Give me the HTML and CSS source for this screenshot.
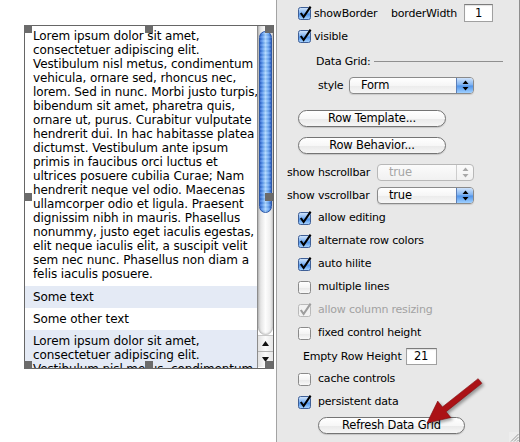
FILE: index.html
```html
<!DOCTYPE html>
<html>
<head>
<meta charset="utf-8">
<link rel="stylesheet" href="styles.css">
</head>
<body>
<svg class="defs" aria-hidden="true">
  <defs>
    <linearGradient id="gBlue" x1="0" y1="0" x2="0" y2="1">
      <stop offset="0" stop-color="#d6e8fc"/>
      <stop offset="0.45" stop-color="#7fb2f1"/>
      <stop offset="0.55" stop-color="#4f94eb"/>
      <stop offset="1" stop-color="#acd6ff"/>
    </linearGradient>
    <linearGradient id="gWhite" x1="0" y1="0" x2="0" y2="1">
      <stop offset="0" stop-color="#ffffff"/>
      <stop offset="0.5" stop-color="#f4f4f4"/>
      <stop offset="0.55" stop-color="#e9e9e9"/>
      <stop offset="1" stop-color="#fafafa"/>
    </linearGradient>
    <symbol id="cb-on" viewBox="0 0 14 14">
      <rect x="0.5" y="1.5" width="12" height="12" rx="2" fill="url(#gBlue)" stroke="#3f5f96"/>
      <path d="M2.8 7 L5.6 11 L12.6 0.6" fill="none" stroke="#000" stroke-width="2.1"/>
    </symbol>
    <symbol id="cb-off" viewBox="0 0 14 14">
      <rect x="0.5" y="1.5" width="12" height="12" rx="2" fill="url(#gWhite)" stroke="#8a8a8a"/>
    </symbol>
    <symbol id="cb-dis" viewBox="0 0 14 14">
      <rect x="0.5" y="1.5" width="12" height="12" rx="2" fill="#f1f1f1" stroke="#b9b9b9"/>
      <path d="M2.8 7 L5.6 11 L12.6 0.6" fill="none" stroke="#9d9d9d" stroke-width="2.1"/>
    </symbol>
    <symbol id="steps" viewBox="0 0 7 11">
      <path d="M3.5 0.5 L6.5 4 L0.5 4 Z M3.5 10.5 L6.5 7 L0.5 7 Z"/>
    </symbol>
  </defs>
</svg>

<div class="stage">
  <div class="canvas">
    <div class="grid-obj">
      <div class="dg">
        <div class="rows">
          <div class="row long">
            <div>Lorem ipsum dolor sit amet,</div>
            <div>consectetuer adipiscing elit.</div>
            <div>Vestibulum nisl metus, condimentum</div>
            <div>vehicula, ornare sed, rhoncus nec,</div>
            <div>lorem. Sed in nunc. Morbi justo turpis,</div>
            <div>bibendum sit amet, pharetra quis,</div>
            <div>ornare ut, purus. Curabitur vulputate</div>
            <div>hendrerit dui. In hac habitasse platea</div>
            <div>dictumst. Vestibulum ante ipsum</div>
            <div>primis in faucibus orci luctus et</div>
            <div>ultrices posuere cubilia Curae; Nam</div>
            <div>hendrerit neque vel odio. Maecenas</div>
            <div>ullamcorper odio et ligula. Praesent</div>
            <div>dignissim nibh in mauris. Phasellus</div>
            <div>nonummy, justo eget iaculis egestas,</div>
            <div>elit neque iaculis elit, a suscipit velit</div>
            <div>sem nec nunc. Phasellus non diam a</div>
            <div>felis iaculis posuere.</div>
          </div>
          <div class="row short alt">Some text</div>
          <div class="row short">Some other text</div>
          <div class="row long alt last">
            <div>Lorem ipsum dolor sit amet,</div>
            <div>consectetuer adipiscing elit.</div>
            <div>Vestibulum nisl metus, condimentum</div>
          </div>
        </div>
        <div class="vscroll">
          <div class="track"><div class="thumb"></div></div>
          <div class="arr up"><svg viewBox="0 0 7 5"><path d="M3.5 0 L7 5 L0 5 Z"/></svg></div>
          <div class="arr down"><svg viewBox="0 0 7 5"><path d="M0 0 L7 0 L3.5 5 Z"/></svg></div>
        </div>
      </div>
      <span class="h tl"></span><span class="h tm"></span><span class="h tr"></span>
      <span class="h ml"></span><span class="h mr"></span>
      <span class="h bl"></span><span class="h bm"></span><span class="h br"></span>
    </div>
  </div>

  <div class="panel">
    <div class="prow r1">
      <svg class="cb"><use href="#cb-on"/></svg>
      <span class="lbl tight w-sb">showBorder</span>
      <span class="lbl w-bw">borderWidth</span>
      <span class="field f-bw">1</span>
    </div>
    <div class="prow r2">
      <svg class="cb"><use href="#cb-on"/></svg>
      <span class="lbl tight">visible</span>
    </div>
    <div class="prow r3">
      <span class="lbl sect">Data Grid:</span>
      <span class="rule"></span>
    </div>
    <div class="prow r4">
      <span class="lbl w-style">style</span>
      <div class="popup p-style"><span class="val">Form</span><span class="step"><svg><use href="#steps"/></svg></span></div>
    </div>
    <div class="prow r5">
      <div class="btn b-row">Row Template...</div>
    </div>
    <div class="prow r6">
      <div class="btn b-row">Row Behavior...</div>
    </div>
    <div class="prow r7">
      <span class="lbl w-scroll">show hscrollbar</span>
      <div class="popup p-scroll disabled"><span class="val">true</span><span class="step"><svg><use href="#steps"/></svg></span></div>
    </div>
    <div class="prow r8">
      <span class="lbl w-scroll">show vscrollbar</span>
      <div class="popup p-scroll"><span class="val">true</span><span class="step"><svg><use href="#steps"/></svg></span></div>
    </div>
    <div class="prow ck first">
      <svg class="cb"><use href="#cb-on"/></svg><span class="lbl">allow editing</span>
    </div>
    <div class="prow ck">
      <svg class="cb"><use href="#cb-on"/></svg><span class="lbl">alternate row colors</span>
    </div>
    <div class="prow ck">
      <svg class="cb"><use href="#cb-on"/></svg><span class="lbl">auto hilite</span>
    </div>
    <div class="prow ck">
      <svg class="cb"><use href="#cb-off"/></svg><span class="lbl">multiple lines</span>
    </div>
    <div class="prow ck">
      <svg class="cb"><use href="#cb-dis"/></svg><span class="lbl dim">allow column resizing</span>
    </div>
    <div class="prow ck">
      <svg class="cb"><use href="#cb-off"/></svg><span class="lbl">fixed control height</span>
    </div>
    <div class="prow re">
      <span class="lbl w-erh">Empty Row Height</span>
      <span class="field f-erh">21</span>
    </div>
    <div class="prow ck first">
      <svg class="cb"><use href="#cb-off"/></svg><span class="lbl">cache controls</span>
    </div>
    <div class="prow ck">
      <svg class="cb"><use href="#cb-on"/></svg><span class="lbl">persistent data</span>
    </div>
    <div class="prow rb">
      <div class="btn b-refresh">Refresh Data Grid</div>
    </div>
    <svg class="grip" viewBox="0 0 10 10"><path d="M9.5 2 L2 9.5 M9.5 5 L5 9.5 M9.5 8 L8 9.5" stroke="#9a9a9a" stroke-width="1"/></svg>
  </div>

  <svg class="red-arrow" viewBox="0 0 520 442">
    <polygon points="478.14,378.65 481.86,383.35 446.11,411.69 450.77,417.57 427,423 437.73,401.11 442.39,406.99" fill="#ab1216" stroke="#7e0a0d" stroke-width="0.6"/>
  </svg>
</div>
</body>
</html>
```

FILE: styles.css
```css
* { box-sizing: border-box; }

html, body {
  margin: 0;
  padding: 0;
  background: #ffffff;
}

body {
  font-family: "DejaVu Sans", "Liberation Sans", sans-serif;
  color: #000;
}

.defs {
  position: absolute;
  width: 0;
  height: 0;
  overflow: hidden;
}

.stage {
  position: relative;
  display: flex;
  width: 520px;
  height: 442px;
  overflow: hidden;
}

/* ---------- left canvas with the data grid ---------- */
.canvas {
  width: 276px;
  flex: none;
  padding: 25px 0 0 24px;
  background: #fff;
}

.grid-obj {
  position: relative;
  width: 250px;
  height: 344px;
}

.dg {
  display: flex;
  width: 100%;
  height: 100%;
  border: 1px solid #666;
  background: #fff;
}

.rows {
  flex: 1;
  overflow: hidden;
  font-size: 12px;
  letter-spacing: -0.1px;
  line-height: 14px;
}

.row {
  padding-left: 8px;
  white-space: nowrap;
}

.row.long {
  height: 260px;
  padding-top: 3px;
}

.row.short {
  height: 22px;
  line-height: 22px;
}

.row.alt { background: #e4eaf5; }

.row.last {
  height: 60px;
  padding-top: 4px;
}

.vscroll {
  width: 16px;
  flex: none;
  display: flex;
  flex-direction: column;
  border-left: 1px solid #8c8c8c;
  background: #fff;
}

.track {
  height: 309px;
  padding: 5px 1px 0 1px;
  border-radius: 0 0 8px 8px;
  background: linear-gradient(to right, #c4c4c4, #e6e6e6 20%, #fdfdfd 50%, #efefef 80%, #d2d2d2);
  box-shadow: inset 0 -1px 2px rgba(0,0,0,0.25);
}

.thumb {
  height: 182px;
  border-radius: 7px;
  border: 1px solid #2c58a8;
  background:
    repeating-linear-gradient(to bottom, rgba(255,255,255,0.12) 0 2px, rgba(0,0,0,0.04) 2px 4px),
    linear-gradient(to right, #2f64cc, #5b98ee 22%, #a9d4ff 50%, #6aa6f4 78%, #2d62c6);
}

.arr {
  height: 16px;
  display: flex;
  align-items: center;
  justify-content: center;
  background: linear-gradient(to right, #e2e2e2, #fbfbfb 50%, #e6e6e6);
}

.arr svg {
  width: 7px;
  height: 5px;
  fill: #111;
}

.arr.up { border-top: 1px solid #c8c8c8; }
.arr.down { border-top: 1px solid #b3b3b3; }

.h {
  position: absolute;
  width: 8px;
  height: 8px;
  background: #6b6b6b;
}
.h.tl { left: 0; top: 0; }
.h.tm { left: 121px; top: 0; }
.h.tr { left: 241px; top: 0; }
.h.ml { left: 0; top: 168px; }
.h.mr { left: 241px; top: 168px; }
.h.bl { left: 0; top: 336px; }
.h.bm { left: 121px; top: 336px; }
.h.br { left: 241px; top: 336px; }

/* ---------- right inspector panel ---------- */
.panel {
  position: relative;
  width: 244px;
  flex: none;
  background: #e8e8e8;
  border-left: 1px solid #a3a3a3;
  border-right: 1px solid #8e8e8e;
  padding-top: 4px;
  display: flex;
  flex-direction: column;
  font-size: 11px;
  letter-spacing: -0.2px;
}

.prow {
  display: flex;
  align-items: center;
  height: 18px;
  flex: none;
}

.r2 { margin-top: 5px; }
.r3 { margin-top: 7px; }
.r4 { margin-top: 7px; height: 17px; }
.r5 { margin-top: 16px; height: 17px; }
.r6 { margin-top: 10px; height: 17px; }
.r7 { margin-top: 10px; height: 17px; }
.r8 { margin-top: 6px; height: 17px; }
.ck { height: 23px; }
.ck.first { margin-top: 2px; }
.re { margin-top: 4px; height: 17px; }
.rb { margin-top: 4px; height: 17px; }

.cb {
  width: 14px;
  height: 14px;
  flex: none;
  margin-left: 21px;
}

.lbl {
  white-space: nowrap;
  flex: none;
  margin-left: 6px;
}

.lbl.tight { margin-left: 2px; }
.lbl.dim { color: #a2a2a2; }

.w-sb { width: 77px; }
.w-bw { width: 73px; margin-left: 0; }

.field {
  flex: none;
  height: 18px;
  background: #fff;
  border: 1px solid #a0a0a0;
  border-top-color: #7c7c7c;
  box-shadow: inset 0 1px 1px rgba(0,0,0,0.12);
  line-height: 16px;
  font-size: 11.5px;
}

.f-bw { width: 29px; padding-left: 10px; }
.f-erh { width: 31px; height: 17px; line-height: 15px; padding-left: 7px; }

.sect { margin-left: 39px; width: 58px; }

.rule {
  width: 129px;
  height: 1px;
  background: #8f8f8f;
  flex: none;
}

.w-style { margin-left: 41px; width: 31px; }
.w-scroll { margin-left: 10px; width: 90px; }
.w-erh { margin-left: 26px; width: 103px; }

.popup {
  flex: none;
  display: flex;
  height: 17px;
  border: 1px solid #8a8a8a;
  border-radius: 4px;
  background: linear-gradient(#ffffff, #f6f6f6 50%, #ebebeb 52%, #f7f7f7);
  box-shadow: 0 1px 1px rgba(0,0,0,0.12);
  overflow: hidden;
}

.popup .val {
  flex: 1;
  line-height: 15px;
  padding-left: 11px;
  font-size: 11.5px;
}

.popup .step {
  width: 17px;
  flex: none;
  display: flex;
  align-items: center;
  justify-content: center;
  border-left: 1px solid #5c7fb8;
  background: linear-gradient(#cfe3fb, #7db1f0 48%, #4f93ea 52%, #9fd0ff);
}

.popup .step svg {
  width: 7px;
  height: 11px;
  fill: #000;
}

.p-style { width: 125px; }
.p-style .val { padding-left: 11px; }
.p-scroll { width: 97px; }

.popup.disabled {
  border-color: #b8b8b8;
  background: linear-gradient(#fbfbfb, #f1f1f1);
  box-shadow: none;
}
.popup.disabled .val { color: #a5a5a5; }
.popup.disabled .step {
  background: none;
  border-left: 1px solid #cdcdcd;
}
.popup.disabled .step svg { fill: #a8a8a8; }

.btn {
  flex: none;
  height: 17px;
  border: 1px solid #747474;
  border-radius: 9px;
  background: linear-gradient(#ffffff, #f7f7f7 50%, #e9e9e9 52%, #f6f6f6);
  box-shadow: 0 1px 1px rgba(0,0,0,0.15);
  text-align: center;
  line-height: 15px;
  font-size: 11.5px;
  white-space: nowrap;
}

.b-row { width: 148px; margin-left: 21px; }
.b-refresh { width: 147px; margin-left: 41px; }

.grip {
  position: absolute;
  right: 0;
  bottom: 0;
  width: 10px;
  height: 10px;
  background: #ededed;
}

.red-arrow {
  position: absolute;
  left: 0;
  top: 0;
  width: 520px;
  height: 442px;
  pointer-events: none;
  filter: drop-shadow(2px 2px 1.5px rgba(0,0,0,0.35));
}
```
